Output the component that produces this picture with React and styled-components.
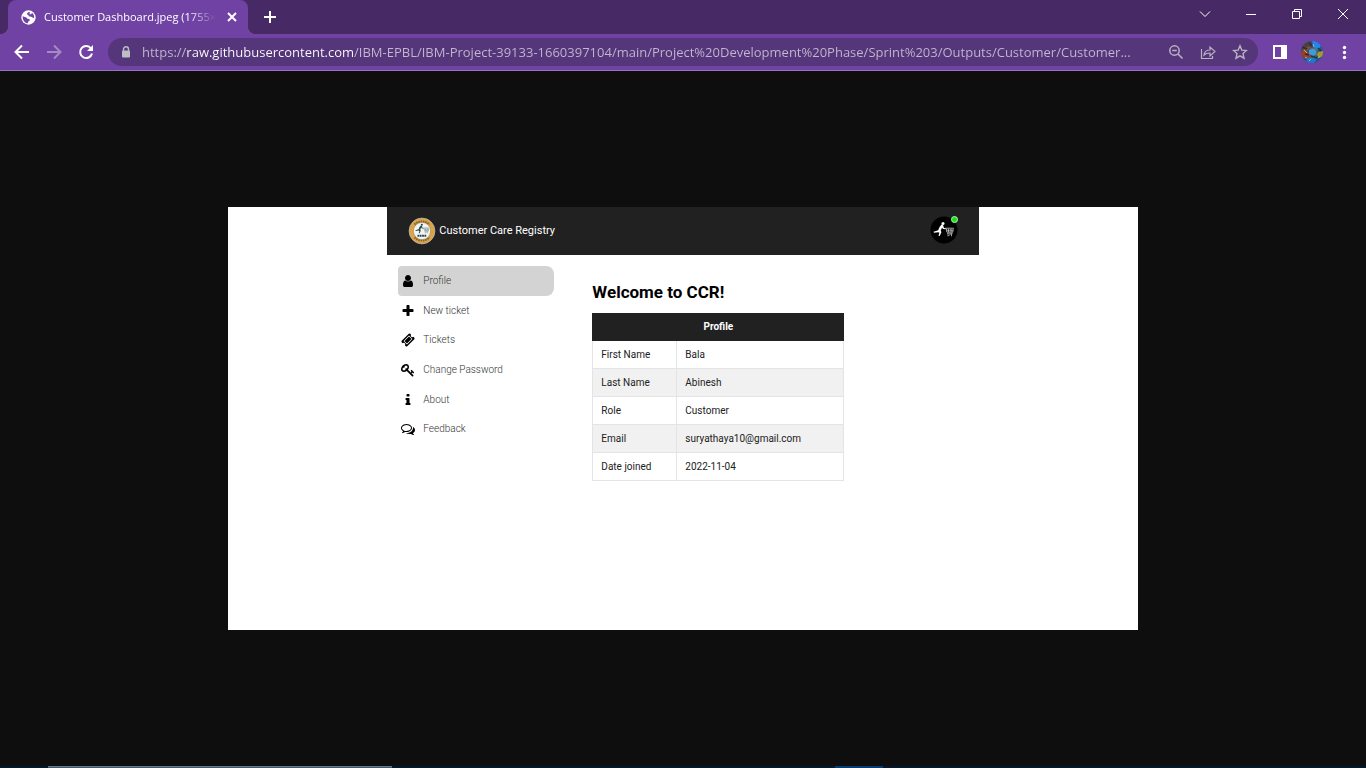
import React from "react";
import styled, { createGlobalStyle } from "styled-components";

const GlobalStyle = createGlobalStyle`
  *, *::before, *::after { box-sizing: border-box; }
  body { margin: 0; background: #0e0e0e; }
  button, input { font: inherit; color: inherit; }
`;

const chromeFont = `"Open Sans", "Noto Sans", sans-serif`;
const pageFont = `Roboto, "Liberation Sans", sans-serif`;

const Screen = styled.div`
  min-height: 100vh;
  display: flex;
  flex-direction: column;
  font-family: ${chromeFont};
`;

const TabStrip = styled.header`
  height: 34px;
  padding-left: 8px;
  display: flex;
  align-items: stretch;
  background: #472a65;
  color: #fff;
`;

const Tab = styled.div`
  position: relative;
  width: 240px;
  padding: 0 8px 0 13px;
  display: flex;
  align-items: center;
  gap: 8px;
  background: #6f42a3;
  border-radius: 8px 8px 0 0;

  &::before,
  &::after {
    content: "";
    position: absolute;
    bottom: 0;
    width: 8px;
    height: 8px;
  }
  &::before {
    right: 100%;
    background: radial-gradient(circle at 0 0, transparent 8px, #6f42a3 8px);
  }
  &::after {
    left: 100%;
    background: radial-gradient(circle at 100% 0, transparent 8px, #6f42a3 8px);
  }
`;

const TabTitle = styled.span`
  flex: 1;
  white-space: nowrap;
  font-size: 11px;
  line-height: 16px;
  mask-image: linear-gradient(to right, #000 84%, transparent);
`;

const IconButton = styled.button`
  width: ${(p) => p.$width || 32}px;
  height: ${(p) => p.$height || 32}px;
  padding: 0;
  flex: none;
  display: flex;
  align-items: center;
  justify-content: center;
  border: 0;
  border-radius: 4px;
  background: transparent;
  color: ${(p) => p.$color || "#fff"};
`;

const NewTab = styled.div`
  display: flex;
  align-items: center;
  padding-left: 6px;
`;

const WindowControls = styled.div`
  margin-left: auto;
  display: flex;
  align-items: center;
  padding-bottom: 6px;
`;

const Toolbar = styled.div`
  height: 37px;
  padding: 0 6px;
  display: flex;
  align-items: center;
  background: #6f42a3;
  border-bottom: 1px solid #9474bb;
  color: #fff;
`;

const AddressBar = styled.div`
  flex: 1;
  min-width: 0;
  height: 28px;
  margin: 0 6px;
  padding: 0 2px 0 13px;
  display: flex;
  align-items: center;
  border-radius: 14px;
  background: #56367a;
`;

const UrlInput = styled.input`
  flex: 1;
  min-width: 0;
  height: 24px;
  margin-left: 11px;
  padding: 0;
  border: 0;
  outline: 0;
  font-size: 13px;
  text-overflow: ellipsis;
  color: transparent;
  background: linear-gradient(to right, #c3b8d0 45px, #fff 45px, #fff 211px, #c3b8d0 211px);
  background-clip: text;
`;

const Viewport = styled.main`
  flex: 1;
  display: flex;
  align-items: center;
  justify-content: center;
`;

const Sheet = styled.section`
  width: 66.6%;
  aspect-ratio: 910 / 423;
  display: flex;
  justify-content: center;
  align-items: flex-start;
  background: #fff;
  font-family: ${pageFont};
`;

const Dashboard = styled.div`
  width: 65%;
`;

const AppHeader = styled.header`
  height: 48px;
  padding: 0 21px;
  display: flex;
  align-items: center;
  justify-content: space-between;
  background: #212121;
  color: #fff;
`;

const Brand = styled.div`
  display: flex;
  align-items: center;
  gap: 3px;
  font-size: 11px;
  line-height: 16px;
`;

const Avatar = styled.div`
  position: relative;
  width: 28px;
  height: 28px;
  margin-bottom: 3px;

  svg { display: block; }
`;

const OnlineDot = styled.span`
  position: absolute;
  top: 0;
  right: 0;
  width: 7px;
  height: 7px;
  border: 1px solid #b8f5b8;
  border-radius: 50%;
  background: #12e612;
`;

const Body = styled.div`
  padding: 11px;
  display: flex;
  align-items: flex-start;
  gap: 38px;
`;

const Nav = styled.nav`
  width: 156px;
  height: 178px;
  flex: none;
  display: grid;
  grid-auto-rows: 1fr;
`;

const NavLink = styled.a`
  padding-left: 3px;
  display: flex;
  align-items: center;
  gap: 8px;
  border-radius: 4px 8px 8px 4px;
  background: ${(p) => (p.$active ? "#d3d3d3" : "transparent")};
  color: #333;
  font-size: 10px;
  line-height: 12px;
  font-weight: 300;
  text-decoration: none;

  svg { color: #000; }
`;

const Content = styled.div`
  padding-top: 16px;
`;

const Title = styled.h1`
  margin: 0 0 11px;
  font-size: 17px;
  line-height: 20px;
  font-weight: 700;
  color: #000;
`;

const ProfileTable = styled.table`
  width: 252px;
  table-layout: fixed;
  border-collapse: collapse;
  font-size: 10px;
  line-height: 12px;
  color: #212121;

  th, td {
    height: 28px;
    padding: 0 8px;
    text-align: left;
    font-weight: 400;
    border: 1px solid #e4e4e4;
  }
  thead th {
    height: 27px;
    background: #212121;
    border-color: #212121;
    color: #fff;
    font-weight: 700;
    text-align: center;
  }
  tbody tr:nth-child(even) { background: #f1f1f1; }
`;

const LabelCol = styled.col`
  width: 84px;
`;

const Taskbar = styled.footer`
  height: 2px;
  padding-left: 48px;
  display: flex;
  background: #05182a;
`;

const SearchEdge = styled.div`
  width: 344px;
  background: #46586a;
  border-top: 1px solid #667788;
`;

const ActiveTask = styled.div`
  width: 48px;
  margin-left: 443px;
  background: #063d70;
`;

const Stroke = ({ size = 16, width = 2, children }) => (
  <svg width={size} height={size} viewBox="0 0 16 16" fill="none" stroke="currentColor" strokeWidth={width} aria-hidden="true">
    {children}
  </svg>
);

const glyphs = {
  user: "M1536 1399q0 109-62.5 187t-150.5 78h-854q-88 0-150.5-78t-62.5-187q0-85 8.5-160.5t31.5-152 58.5-131 94-89 134.5-34.5q131 128 313 128t313-128q76 0 134.5 34.5t94 89 58.5 131 31.5 152 8.5 160.5zm-256-887q0 159-112.5 271.5t-271.5 112.5-271.5-112.5-112.5-271.5 112.5-271.5 271.5-112.5 271.5 112.5 112.5 271.5z",
  plus: "M1600 736v192q0 40-28 68t-68 28h-416v416q0 40-28 68t-68 28h-192q-40 0-68-28t-28-68v-416h-416q-40 0-68-28t-28-68v-192q0-40 28-68t68-28h416v-416q0-40 28-68t68-28h192q40 0 68 28t28 68v416h416q40 0 68 28t28 68z",
  ticket: "M1024 452l316 316-572 572-316-316zm-211 979l618-618q19-19 19-45t-19-45l-362-362q-18-18-45-18t-45 18l-618 618q-19 19-19 45t19 45l362 362q18 18 45 18t45-18zm889-637l-907 908q-37 37-90.5 37t-90.5-37l-126-126q56-56 56-136t-56-136-136-56-136 56l-125-126q-37-37-37-90.5t37-90.5l907-906q37-37 90.5-37t90.5 37l125 125q-56 56-56 136t56 136 136 56 136-56l126 125q37 37 37 90.5t-37 90.5z",
  key: "M832 512q0-80-56-136t-136-56-136 56-56 136q0 42 19 83-41-19-83-19-80 0-136 56t-56 136 56 136 136 56 136-56 56-136q0-42-19-83 41 19 83 19 80 0 136-56t56-136zm851 704q0 17-49 66t-66 49q-9 0-28.5-16t-36.5-33-38.5-40-24.5-26l-96 96 220 220q28 28 28 68 0 42-39 81t-81 39q-40 0-68-28l-671-671q-176 131-365 131-163 0-265.5-102.5t-102.5-265.5q0-160 95-313t248-248 313-95q163 0 265.5 102.5t102.5 265.5q0 189-131 365l355 355 96-96q-3-3-26-24.5t-40-38.5-33-36.5-16-28.5q0-17 49-66t66-49q13 0 23 10 6 6 46 44.5t82 79.5 86.5 86 73 78 28.5 41z",
  info: "M1216 1344v128q0 26-19 45t-45 19h-512q-26 0-45-19t-19-45v-128q0-26 19-45t45-19h64v-384h-64q-26 0-45-19t-19-45v-128q0-26 19-45t45-19h384q26 0 45 19t19 45v576h64q26 0 45 19t19 45zm-128-1152v192q0 26-19 45t-45 19h-256q-26 0-45-19t-19-45v-192q0-26 19-45t45-19h256q26 0 45 19t19 45z",
  comments: "M704 384q-153 0-286 52t-211.5 141-78.5 191q0 82 53 158t149 132l97 56-35 84q34-20 62-39l44-31 53 10q78 14 153 14 153 0 286-52t211.5-141 78.5-191-78.5-191-211.5-141-286-52zm0-128q191 0 353.5 68.5t256.5 186.5 94 257-94 257-256.5 186.5-353.5 68.5q-86 0-176-16-124 88-278 128-36 9-86 16h-3q-11 0-20.5-8t-11.5-21q-1-3-1-6.5t.5-6.5 2-6l2.5-5 3.5-5.5 4-5 4.5-5 4-4.5q5-6 23-25t26-29.5 22.5-29 25-38.5 20.5-44q-124-72-195-177t-71-224q0-139 94-257t256.5-186.5 353.5-68.5zm822 1169q10 24 20.5 44t25 38.5 22.5 29 26 29.5 23 25q1 1 4 4.5t4.5 5 4 5 3.5 5.5l2.5 5 2 6 .5 6.5-1 6.5q-3 14-13 22t-22 7q-50-7-86-16-154-40-278-128-90 16-176 16-271 0-472-132 58 4 88 4 161 0 309-45t264-129q125-92 192-212t67-254q0-77-23-152 129 71 204 178t75 230q0 120-71 224.5t-195 176.5z",
};

const NavIcon = ({ name }) => (
  <svg width="14" height="14" viewBox="0 0 1792 1792" fill="currentColor" aria-hidden="true">
    <path d={glyphs[name]} />
  </svg>
);

const Globe = () => (
  <svg width="15" height="15" viewBox="0 0 15 15" aria-hidden="true">
    <circle cx="7.5" cy="7.5" r="7.2" fill="#fff" />
    <path d="M8.600 1.800C7 2.300 6 3.200 5.900 4.600c1.300 0 1.800.5 1.900 1.700l2.400.5 2.900 1.500c.4-2.600-.6-4.600-2.200-5.600l-.4 1.200-1.700.5z" fill="#6f42a3" />
    <path d="M1.700 6.200l3.600 1.200 1.300 1.400 2.100.5-.2 1.600-1.300.5-.4 1.900c-2.900-.2-5.300-3-5.100-7.100z" fill="#6f42a3" />
  </svg>
);

const Lock = () => (
  <svg width="10" height="12" viewBox="0 0 10 12" aria-hidden="true">
    <path d="M2.500 5V3.300a2.500 2.500 0 0 1 5 0V5" fill="none" stroke="#bdbdc4" strokeWidth="1.400" />
    <rect x="1" y="4.500" width="8" height="7" rx="1" fill="#bdbdc4" />
  </svg>
);

const ProfilePicture = () => (
  <svg width="22" height="22" viewBox="0 0 22 22" aria-hidden="true">
    <clipPath id="profile-clip"><circle cx="11" cy="11" r="11" /></clipPath>
    <g clipPath="url(#profile-clip)">
      <rect width="22" height="22" fill="#27568a" />
      <path d="M0 4 8 0l4 3-3 4-9 3z" fill="#4d4140" />
      <path d="M1 9l7-4 2 1-3 3-5 2z" fill="#8e4a32" />
      <path d="M0 11l6-1 2 3 4 3-1 2-6-1-5-2z" fill="#a83a1c" />
      <path d="M11 0h6l3 5-3 4-4-2z" fill="#2585ef" />
      <path d="M8 9l4-2 3 2 1 4-4 2-4-2z" fill="#3f9bdc" />
      <path d="M17 11l5-1v5l-4 2-2-3z" fill="#a59a30" />
      <path d="M6 17l6-1 4 2-3 4H6z" fill="#2277cd" />
      <path d="M9 8l5-1 2 3-1 5-4 1" fill="none" stroke="#66704f" strokeWidth="1.200" />
      <path d="M1 6l5 2M4 13l4 1M10 15l6 2M17 7l3 3M8 2l3 3" stroke="#26342f" strokeWidth="1.600" />
      <path d="M3 9l3 3M12 3l1 3M17 17l2-2M8 20l2-2M4 16l2 1" stroke="#96b8b0" strokeWidth="1" />
    </g>
  </svg>
);

const CartRunner = () => (
  <>
    <circle cx="13" cy="7.500" r="1.500" />
    <path d="M11.500 8.500 9.400 11.200 8.200 14.200 3.600 15.800l.3 1 4.300-.6 1.200.5-.9 3 1.200.2 1.700-3.600-.7-1.700 1.300-2.800 1.200 1.300 2.700.1v-.9l-2-.4-.7-2.600z" />
    <path d="M15.200 12.200h8.400M16.300 12.500l.5 3.600h6l.5-3.600M18.500 12.500v3.500M21 12.500v3.500M16.500 14.200h6.500" fill="none" stroke="currentColor" strokeWidth=".8" />
    <path d="M17 17.200h5.800M18 17.500v2.800M21.500 17.500v2.800M18.500 20l2.500-2.500" fill="none" stroke="currentColor" strokeWidth=".8" />
  </>
);

const BrandSeal = () => (
  <svg width="28" height="28" viewBox="0 0 28 28" aria-hidden="true">
    <circle cx="14" cy="14" r="12.900" fill="#dda248" stroke="#b9b9a4" strokeWidth=".8" />
    <path d="M6.500 7.500a10.700 10.700 0 0 1 15 0M6.500 20.500a10.700 10.700 0 0 0 15 0" fill="none" stroke="#604b2b" strokeWidth="2" strokeDasharray="1.500 .8" opacity=".75" />
    <circle cx="14" cy="14" r="8.600" fill="#f3f5f2" stroke="#8d7c50" strokeWidth=".5" />
    <g fill="#24464c" color="#7c9090" transform="translate(5 2.600) scale(.68)"><CartRunner /></g>
    <path d="M9.500 18.800h9" stroke="#24464c" strokeWidth="2" strokeDasharray="1.800 .5" />
  </svg>
);

const navItems = [
  ["user", "Profile"],
  ["plus", "New ticket"],
  ["ticket", "Tickets"],
  ["key", "Change Password"],
  ["info", "About"],
  ["comments", "Feedback"],
];

const profile = [
  ["First Name", "Bala"],
  ["Last Name", "Abinesh"],
  ["Role", "Customer"],
  ["Email", "suryathaya10@gmail.com"],
  ["Date joined", "2022-11-04"],
];

const url =
  "https://raw.githubusercontent.com/IBM-EPBL/IBM-Project-39133-1660397104/main/Project%20Development%20Phase/Sprint%203/Outputs/Customer/Customer...";

export default function App() {
  return (
    <Screen>
      <GlobalStyle />
      <TabStrip>
        <Tab>
          <Globe />
          <TabTitle>Customer Dashboard.jpeg (1755×</TabTitle>
          <IconButton $width={16} $height={16} aria-label="Close tab">
            <Stroke><path d="M4 4l8 8M12 4l-8 8" /></Stroke>
          </IconButton>
        </Tab>
        <NewTab>
          <IconButton aria-label="New tab">
            <Stroke><path d="M8 2v12M2 8h12" /></Stroke>
          </IconButton>
        </NewTab>
        <WindowControls>
          <IconButton $width={46} $height={28} aria-label="Search tabs">
            <Stroke width={1}><path d="M3 5.500l5 5 5-5" /></Stroke>
          </IconButton>
          <IconButton $width={46} $height={28} aria-label="Minimize">
            <Stroke width={1}><path d="M3 8.500h10" /></Stroke>
          </IconButton>
          <IconButton $width={46} $height={28} aria-label="Restore">
            <Stroke width={1}><path d="M3.500 5.500h7v7h-7zM5.500 5.500v-2h7v7h-2" /></Stroke>
          </IconButton>
          <IconButton $width={46} $height={28} aria-label="Close">
            <Stroke width={1}><path d="M3 3l10 10M13 3L3 13" /></Stroke>
          </IconButton>
        </WindowControls>
      </TabStrip>
      <Toolbar>
        <IconButton aria-label="Back">
          <Stroke><path d="M15 8H2M8 1.500L1.500 8 8 14.500" /></Stroke>
        </IconButton>
        <IconButton $color="#a58bc6" aria-label="Forward">
          <Stroke><path d="M1 8h13M8 1.500L14.500 8 8 14.500" /></Stroke>
        </IconButton>
        <IconButton aria-label="Reload">
          <Stroke>
            <path d="M13 4.500A6 6 0 1 0 14 9.500" />
            <path d="M15 1v6H9z" fill="currentColor" stroke="none" />
          </Stroke>
        </IconButton>
        <AddressBar>
          <Lock />
          <UrlInput aria-label="Address" defaultValue={url} spellCheck={false} />
          <IconButton $color="#bab2c2" aria-label="Zoom">
            <Stroke width={1.5}>
              <circle cx="6.500" cy="6.500" r="4.700" />
              <path d="M10 10l4.500 4.500M4.200 6.500h4.600" />
            </Stroke>
          </IconButton>
          <IconButton $color="#bab2c2" aria-label="Share">
            <Stroke width={1.2}>
              <path d="M1.500 5v9.500h11V12" />
              <path d="M4 11c.5-3.500 2.500-5 6-5V3l5 4.500-5 4.500V9C7 9 5.500 9.500 4 11z" />
            </Stroke>
          </IconButton>
          <IconButton $color="#bab2c2" aria-label="Bookmark">
            <Stroke width={1.4}>
              <path d="M8 1.800l1.800 4.300 4.700.4-3.500 3.100 1 4.600L8 11.800l-4 2.400 1-4.600L1.500 6.500l4.700-.4z" />
            </Stroke>
          </IconButton>
        </AddressBar>
        <IconButton aria-label="Side panel">
          <Stroke>
            <path d="M2 2h12v12H2z" />
            <path d="M9 2h5v12H9z" fill="currentColor" stroke="none" />
          </Stroke>
        </IconButton>
        <IconButton aria-label="Account"><ProfilePicture /></IconButton>
        <IconButton aria-label="Menu">
          <svg width="16" height="16" viewBox="0 0 16 16" fill="currentColor" aria-hidden="true">
            <circle cx="8.500" cy="3.500" r="1.700" /><circle cx="8.500" cy="8.500" r="1.700" /><circle cx="8.500" cy="13.500" r="1.700" />
          </svg>
        </IconButton>
      </Toolbar>
      <Viewport>
        <Sheet>
          <Dashboard>
            <AppHeader>
              <Brand><BrandSeal />Customer Care Registry</Brand>
              <Avatar>
                <svg width="28" height="28" viewBox="0 0 28 28" aria-hidden="true">
                  <circle cx="14" cy="14" r="13.500" fill="#000" />
                  <g fill="#fff" color="#c8c8c8"><CartRunner /></g>
                </svg>
                <OnlineDot />
              </Avatar>
            </AppHeader>
            <Body>
              <Nav>
                {navItems.map(([icon, label], i) => (
                  <NavLink key={label} href={`#${icon}`} $active={i === 0}>
                    <NavIcon name={icon} />
                    {label}
                  </NavLink>
                ))}
              </Nav>
              <Content>
                <Title>Welcome to CCR!</Title>
                <ProfileTable>
                  <colgroup><LabelCol /><col /></colgroup>
                  <thead>
                    <tr><th colSpan={2}>Profile</th></tr>
                  </thead>
                  <tbody>
                    {profile.map(([label, value]) => (
                      <tr key={label}><th scope="row">{label}</th><td>{value}</td></tr>
                    ))}
                  </tbody>
                </ProfileTable>
              </Content>
            </Body>
          </Dashboard>
        </Sheet>
      </Viewport>
      <Taskbar>
        <SearchEdge />
        <ActiveTask />
      </Taskbar>
    </Screen>
  );
}
